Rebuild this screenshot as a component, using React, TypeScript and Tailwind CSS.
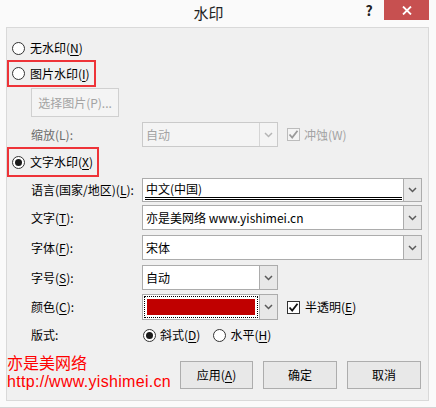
import type { ReactNode } from 'react';

const FONT = { fontFamily: '"Noto Sans CJK SC", "Noto Sans", sans-serif' };

// Hotkey letter with underline
function Key({ k }: { k: string }) {
  return (
    <>
      (<span className="underline underline-offset-[2px]">{k}</span>)
    </>
  );
}

function Radio({ checked = false }: { checked?: boolean }) {
  return (
    <span className="w-[13px] h-[13px] rounded-full border border-[#333333] bg-white flex items-center justify-center shrink-0">
      {checked && <span className="w-[7px] h-[7px] rounded-full bg-[#1a1a1a]" />}
    </span>
  );
}

function Check({ disabled = false }: { disabled?: boolean }) {
  return (
    <span
      className={`w-[13px] h-[13px] border flex items-center justify-center shrink-0 ${
        disabled ? 'border-[#bcbcbc] bg-[#f4f4f4]' : 'border-[#333333] bg-white'
      }`}
    >
      <svg width="11" height="11" viewBox="0 0 11 11">
        <path
          d="M1.5 5.5 L4.2 8.5 L9.5 1.8"
          fill="none"
          stroke={disabled ? '#9a9a9a' : '#111111'}
          strokeWidth="1.8"
        />
      </svg>
    </span>
  );
}

function Chevron({ disabled = false }: { disabled?: boolean }) {
  return (
    <svg width="9" height="6" viewBox="0 0 9 6">
      <path d="M1 1 L4.5 4.5 L8 1" fill="none" stroke={disabled ? '#b5b5b5' : '#5a5a5a'} strokeWidth="1.5" />
    </svg>
  );
}

function Combo({
  width,
  height = 'h-[25px]',
  disabled = false,
  children,
}: {
  width: string;
  height?: string;
  disabled?: boolean;
  children: ReactNode;
}) {
  return (
    <div
      className={`${width} ${height} flex border ${
        disabled ? 'border-[#cacaca] bg-[#f4f4f4]' : 'border-[#acacac] bg-white'
      }`}
    >
      <div className="flex-1 flex items-center min-w-0">{children}</div>
      <div
        className={`w-[18px] flex items-center justify-center border-l ${
          disabled ? 'border-[#d5d5d5] bg-[#f4f4f4]' : 'border-[#acacac] bg-[#e8e8e8]'
        }`}
      >
        <Chevron disabled={disabled} />
      </div>
    </div>
  );
}

function Row({ label, mt, children }: { label: ReactNode; mt: string; children: ReactNode }) {
  return (
    <div className={`flex items-center ${mt}`}>
      <div className="w-[135px] shrink-0 pl-[24px] whitespace-nowrap text-[12px] text-black">{label}</div>
      {children}
    </div>
  );
}

export default function App() {
  return (
    <div className="w-[436px] h-[408px] bg-[#fafafa] flex flex-col border-b border-[#d4d4d4]" style={FONT}>
      {/* Title bar */}
      <div className="h-[27px] flex items-start shrink-0">
        <div className="flex-1 h-full flex items-center justify-center pl-[60px] text-[15px] text-[#222222]">水印</div>
        <div className="w-[24px] h-[20px] flex items-center justify-center text-[14px] font-bold text-[#222222] mr-[3px]">?</div>
        <div className="w-[45px] h-[20px] bg-[#c75050] flex items-center justify-center mr-[7px]">
          <svg width="10" height="9" viewBox="0 0 10 9">
            <path d="M1 0.5 L9 8.5 M9 0.5 L1 8.5" stroke="#ffffff" strokeWidth="1.8" />
          </svg>
        </div>
      </div>

      {/* Main panel */}
      <div className="ml-[6px] w-[423px] h-[374px] border border-[#d9d9d9] bg-[#f0f0f0] flex flex-col text-[12px] text-black">
        {/* No watermark */}
        <div className="mt-[8px] h-[24px] flex items-center pl-[5px] gap-[5px]">
          <Radio />
          <span>
            无水印<Key k="N" />
          </span>
        </div>

        {/* Picture watermark */}
        <div className="w-[89px] h-[27px] border-2 border-[#ee3338] flex items-center pl-[3px] gap-[5px]">
          <Radio />
          <span>
            图片水印<Key k="I" />
          </span>
        </div>

        <div className="mt-[1px] ml-[24px] w-[88px] h-[29px] border border-[#d0d0d0] bg-[#f4f4f4] flex items-center justify-center text-[#a3a3a3]">
          选择图片(P)...
        </div>

        <div className="mt-[5px] h-[25px] flex items-center">
          <div className="w-[135px] pl-[24px] text-[#6d6d6d]">缩放(L):</div>
          <Combo width="w-[136px]" disabled>
            <span className="pl-[3px] text-[#a3a3a3]">自动</span>
          </Combo>
          <div className="ml-[9px] flex items-center gap-[4px] text-[#a3a3a3]">
            <Check disabled />
            <span>冲蚀(W)</span>
          </div>
        </div>

        {/* Text watermark */}
        <div className="w-[92px] h-[30px] border-2 border-[#ee3338] flex items-center pl-[3px] gap-[5px]">
          <Radio checked />
          <span>
            文字水印<Key k="X" />
          </span>
        </div>

        <Row label={<>语言(国家/地区)<Key k="L" />:</>} mt="mt-[1px]">
          <Combo width="w-[280px]" height="h-[24px]">
            <div className="w-full h-full pl-[2px] pr-[1px] pt-[1px]">
              <div className="h-[20px] flex items-center border-b-[3px] border-double border-black pl-[1px]">中文(中国)</div>
            </div>
          </Combo>
        </Row>

        <Row label={<>文字<Key k="T" />:</>} mt="mt-[3px]">
          <Combo width="w-[280px]">
            <span className="pl-[3px]">亦是美网络 www.yishimei.cn</span>
          </Combo>
        </Row>

        <Row label={<>字体<Key k="F" />:</>} mt="mt-[5px]">
          <Combo width="w-[280px]">
            <span className="pl-[3px]">宋体</span>
          </Combo>
        </Row>

        <Row label={<>字号<Key k="S" />:</>} mt="mt-[5px]">
          <Combo width="w-[136px]">
            <span className="pl-[3px]">自动</span>
          </Combo>
        </Row>

        <Row label={<>颜色<Key k="C" />:</>} mt="mt-[4px]">
          <Combo width="w-[136px]" height="h-[26px]">
            <div className="w-full h-full p-[1px]">
              <div className="w-full h-full border border-dotted border-black p-[2px]">
                <div className="w-full h-full bg-[#c00000]" />
              </div>
            </div>
          </Combo>
          <div className="ml-[9px] flex items-center gap-[5px]">
            <Check />
            <span>
              半透明<Key k="E" />
            </span>
          </div>
        </Row>

        <div className="mt-[5px] h-[20px] flex items-center">
          <div className="w-[136px] pl-[24px]">版式:</div>
          <div className="flex items-center gap-[4px]">
            <Radio checked />
            <span>
              斜式<Key k="D" />
            </span>
          </div>
          <div className="ml-[13px] flex items-center gap-[4px]">
            <Radio />
            <span>
              水平<Key k="H" />
            </span>
          </div>
        </div>

        {/* Bottom: credit + buttons */}
        <div className="mt-[7px] flex items-start">
          <div className="flex flex-col text-[16px] text-[#ff0000]">
            <span className="h-[20px] leading-[20px]">亦是美网络</span>
            <span
              className="h-[20px] leading-[20px] tracking-[0.3px]"
              style={{ fontFamily: '"Liberation Sans", Arial, sans-serif' }}
            >
              http://www.yishimei.cn
            </span>
          </div>
          <div className="ml-auto mr-[7px] mt-[9px] flex gap-[10px]">
            <div className="w-[73px] h-[28px] border border-[#adadad] bg-[#e8e8e8] flex items-center justify-center">
              应用<Key k="A" />
            </div>
            <div className="w-[74px] h-[28px] border border-[#adadad] bg-[#e8e8e8] flex items-center justify-center">
              确定
            </div>
            <div className="w-[74px] h-[28px] border border-[#adadad] bg-[#e8e8e8] flex items-center justify-center">
              取消
            </div>
          </div>
        </div>
      </div>
    </div>
  );
}
